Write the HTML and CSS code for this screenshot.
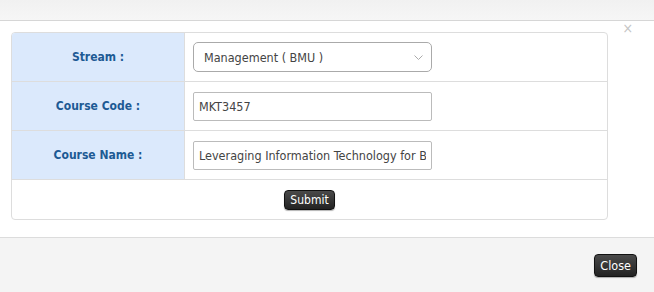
FILE: index.html
```html
<!DOCTYPE html>
<html lang="en">

<head>
    <meta charset="UTF-8" />
    <title>Course Details</title>
    <link rel="stylesheet" href="styles.css">
</head>

<body>
    <div class="modal">
        <div class="modal-header"></div>

        <div class="modal-body">
            <span class="dismiss">&times;</span>

            <div class="form-box">
                <div class="form-row">
                    <div class="label">Stream :</div>
                    <div class="field">
                        <div class="select-box">
                            <span>Management ( BMU )</span>
                            <svg width="9" height="5" viewBox="0 0 9 5">
                                <path d="M0.5 0.5 L4.5 4.5 L8.5 0.5" fill="none" stroke="#aaa" stroke-width="1" />
                            </svg>
                        </div>
                    </div>
                </div>
                <div class="form-row">
                    <div class="label">Course Code :</div>
                    <div class="field">
                        <input type="text" class="text-input" value="MKT3457">
                    </div>
                </div>
                <div class="form-row">
                    <div class="label">Course Name :</div>
                    <div class="field">
                        <input type="text" class="text-input" value="Leveraging Information Technology for Business">
                    </div>
                </div>
                <div class="submit-row">
                    <button class="dark-btn">Submit</button>
                </div>
            </div>
        </div>

        <div class="modal-footer">
            <button class="dark-btn close-btn">Close</button>
        </div>
    </div>
</body>

</html>
```

FILE: styles.css
```css
:root {
    --label-blue: #1d5a94;
    --label-bg: #dbe9fc;
    --line: #dddddd;
    --text: #333;
}

body {
    margin: 0;
    font-family: "DejaVu Sans Condensed", "DejaVu Sans", sans-serif;
    font-size: 12px;
    color: var(--text);
    background-color: #fff;
}

.modal {
    width: 654px;
    height: 292px;
    display: flex;
    flex-direction: column;
}

.modal-header {
    height: 20px;
    background: linear-gradient(#f1f1f1, #f6f6f6);
    border-bottom: 1px solid #d6d6d6;
}

.modal-body {
    position: relative;
    height: 216px;
    padding: 11px 46px 0 11px;
    box-sizing: border-box;
}

.dismiss {
    position: absolute;
    top: 0;
    right: 21px;
    color: #c4c4c4;
    font-size: 14px;
    line-height: 14px;
}

.form-box {
    border: 1px solid var(--line);
    border-radius: 4px;
    overflow: hidden;
}

.form-row {
    display: flex;
    height: 48px;
    border-bottom: 1px solid var(--line);
}

.label {
    width: 172px;
    background-color: var(--label-bg);
    border-right: 1px solid var(--line);
    color: var(--label-blue);
    font-weight: bold;
    display: flex;
    align-items: center;
    justify-content: center;
}

.field {
    flex: 1;
    display: flex;
    align-items: center;
    padding-left: 8px;
}

.select-box {
    width: 239px;
    height: 30px;
    box-sizing: border-box;
    border: 1px solid #aaa;
    border-radius: 5px;
    display: flex;
    align-items: center;
    justify-content: space-between;
    padding: 0 8px 0 10px;
    font-size: 12.5px;
    color: #444;
}

.text-input {
    width: 239px;
    height: 29px;
    box-sizing: border-box;
    border: 1px solid #bbb;
    border-radius: 2px;
    padding: 0 5px;
    font-family: inherit;
    font-size: 12.5px;
    color: #444;
    margin: 0;
}

.submit-row {
    height: 39px;
    display: flex;
    align-items: center;
    justify-content: center;
}

.dark-btn {
    background: linear-gradient(#4a4a4a, #222);
    color: #fff;
    border: 1px solid #111;
    border-radius: 4px;
    font-family: inherit;
    font-size: 12px;
    padding: 2px 5px;
    height: 20px;
    line-height: 14px;
    box-shadow: 0 1px 1px rgba(0, 0, 0, 0.3);
}

.modal-footer {
    flex: 1;
    background-color: #f4f4f4;
    border-top: 1px solid #dcdcdc;
    display: flex;
    justify-content: flex-end;
    align-items: flex-start;
    padding: 16px 17px 0 0;
}

.close-btn {
    height: 23px;
    padding: 2px 5px;
    font-size: 12.5px;
}
```
